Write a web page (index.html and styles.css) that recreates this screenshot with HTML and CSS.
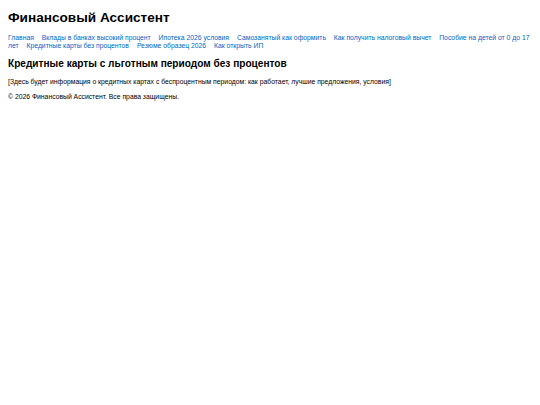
FILE: index.html
```html
<!DOCTYPE html>
<html lang="ru">
<head>
<meta charset="utf-8">
<title>Финансовый Ассистент</title>
<link rel="stylesheet" href="styles.css">
</head>
<body>
<header class="site-header">
<h1 class="site-title">Финансовый Ассистент</h1>
<nav class="site-nav">
<a href="#">Главная</a>
<a href="#">Вклады в банках высокий процент</a>
<a href="#">Ипотека 2026 условия</a>
<a href="#">Самозанятый как оформить</a>
<a href="#">Как получить налоговый вычет</a>
<a href="#">Пособие на детей от 0 до 17 лет</a>
<a href="#">Кредитные карты без процентов</a>
<a href="#">Резюме образец 2026</a>
<a href="#">Как открыть ИП</a>
</nav>
</header>
<main class="content">
<h2 class="page-title">Кредитные карты с льготным периодом без процентов</h2>
<p class="placeholder">[Здесь будет информация о кредитных картах с беспроцентным периодом: как работает, лучшие предложения, условия]</p>
</main>
<footer class="site-footer">
<p>© 2026 Финансовый Ассистент. Все права защищены.</p>
</footer>
</body>
</html>
```
FILE: styles.css
```css
html, body {
  margin: 0;
  padding: 0;
  background: #ffffff;
}
body {
  margin: 8px;
  font-family: "Liberation Sans", Arial, sans-serif;
  color: #000000;
}
.site-title {
  font-size: 13.6px;
  font-weight: bold;
  margin: 0;
  padding-top: 2px;
  line-height: 16px;
}
.site-nav {
  margin-top: 8px;
  font-size: 6.8px;
  line-height: 8px;
}
.site-nav a {
  color: #0066cc;
  text-decoration: none;
  margin-right: 6px;
}
.page-title {
  font-size: 10.1px;
  font-weight: bold;
  margin: 8px 0 0 0;
  line-height: 12px;
}
.placeholder {
  font-size: 6.8px;
  margin: 8px 0 0 0;
  line-height: 8px;
}
.site-footer p {
  font-size: 6.8px;
  margin: 7px 0 0 0;
  line-height: 8px;
}
```
